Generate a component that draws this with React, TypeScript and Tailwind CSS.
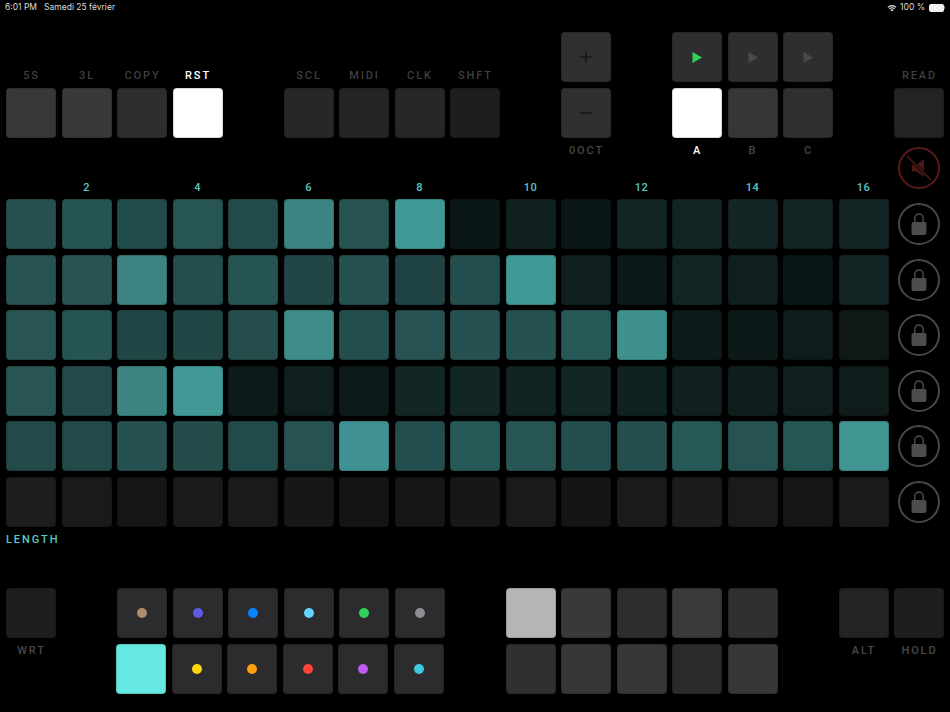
const Pad = ({ c, children }: { c: string; children?: React.ReactNode }) => (
  <div className={`h-[50px] w-[50px] rounded-[4px] border border-black/15 flex items-center justify-center ${c}`}>{children}</div>
);

const labelCore = "flex items-center justify-center h-[14px] pl-[1px] text-[11px] leading-[14px] font-medium tracking-[1.9px] whitespace-nowrap";
const labelBase = `${labelCore} pt-[2px]`;

const Dot = ({ c }: { c: string }) => <span className={`block h-[10px] w-[10px] rounded-full ${c}`} />;

const Play = ({ c }: { c: string }) => (
  <svg width="10" height="11" viewBox="0 0 10 11" className={c}>
    <path d="M0.5 0 L10 5.5 L0.5 11 Z" fill="currentColor" />
  </svg>
);

const Lock = () => (
  <div className="h-[42px] w-[42px] rounded-full border-[2.5px] border-[#484848] flex items-center justify-center">
    <svg width="16" height="24" viewBox="0 0 16 24">
      <path d="M3.8 12 V6.2 a4.2 4.2 0 0 1 8.4 0 V12" fill="none" stroke="#4d4d4d" strokeWidth="1.4" />
      <rect x="0.5" y="10" width="15" height="13" rx="2" fill="#4d4d4d" />
    </svg>
  </div>
);

const matrix: string[][] = [
  ["bg-[#265150]", "bg-[#255452]", "bg-[#224b4b]", "bg-[#265553]", "bg-[#224c4c]", "bg-[#3b8482]", "bg-[#265251]", "bg-[#409896]", "bg-[#0b1716]", "bg-[#11211f]", "bg-[#0b1716]", "bg-[#122524]", "bg-[#122423]", "bg-[#132625]", "bg-[#122423]", "bg-[#132625]"],
  ["bg-[#265251]", "bg-[#275352]", "bg-[#3b8481]", "bg-[#244e4d]", "bg-[#255452]", "bg-[#204645]", "bg-[#255150]", "bg-[#204443]", "bg-[#234e4d]", "bg-[#409896]", "bg-[#0f201f]", "bg-[#0b1918]", "bg-[#122524]", "bg-[#0f1f1e]", "bg-[#0b1716]", "bg-[#122423]"],
  ["bg-[#285453]", "bg-[#255452]", "bg-[#214646]", "bg-[#204645]", "bg-[#244d4c]", "bg-[#3e8c8a]", "bg-[#244e4d]", "bg-[#275251]", "bg-[#265150]", "bg-[#255150]", "bg-[#265855]", "bg-[#3f918e]", "bg-[#0c1a19]", "bg-[#0c1918]", "bg-[#0e1c1b]", "bg-[#0f1a18]"],
  ["bg-[#285453]", "bg-[#224b4a]", "bg-[#3c8581]", "bg-[#419896]", "bg-[#0c1a19]", "bg-[#0e1f1e]", "bg-[#0c1a19]", "bg-[#122624]", "bg-[#122624]", "bg-[#112423]", "bg-[#122625]", "bg-[#0f2120]", "bg-[#0f201f]", "bg-[#0e1e1d]", "bg-[#0f1f1e]", "bg-[#0f1c1b]"],
  ["bg-[#214a49]", "bg-[#214a49]", "bg-[#265150]", "bg-[#244c4b]", "bg-[#214b4b]", "bg-[#265251]", "bg-[#409193]", "bg-[#234e4d]", "bg-[#265a57]", "bg-[#285655]", "bg-[#244e4d]", "bg-[#244f4e]", "bg-[#265857]", "bg-[#265251]", "bg-[#255653]", "bg-[#409593]"],
  ["bg-[#1d1d1d]", "bg-[#1a1a1a]", "bg-[#161616]", "bg-[#1b1b1b]", "bg-[#1a1a1a]", "bg-[#171717]", "bg-[#141414]", "bg-[#161616]", "bg-[#171717]", "bg-[#1a1a1a]", "bg-[#151515]", "bg-[#1a1a1a]", "bg-[#1c1c1c]", "bg-[#1a1a1a]", "bg-[#161616]", "bg-[#1a1a1a]"],
];

const numbers = [
  { n: "2", c: "col-start-2" },
  { n: "4", c: "col-start-4" },
  { n: "6", c: "col-start-6" },
  { n: "8", c: "col-start-8" },
  { n: "10", c: "col-start-10" },
  { n: "12", c: "col-start-12" },
  { n: "14", c: "col-start-14" },
  { n: "16", c: "col-start-16" },
];

const topDots = [
  { d: "bg-[#ac8e68]", c: "col-start-3" },
  { d: "bg-[#5e5ce6]", c: "col-start-4" },
  { d: "bg-[#0a84ff]", c: "col-start-5" },
  { d: "bg-[#64d2ff]", c: "col-start-6" },
  { d: "bg-[#30d158]", c: "col-start-7" },
  { d: "bg-[#8e8e93]", c: "col-start-8" },
];
const lowDots = [
  { d: "bg-[#ffd60a]", c: "col-start-4" },
  { d: "bg-[#ff9f0a]", c: "col-start-5" },
  { d: "bg-[#ff453a]", c: "col-start-6" },
  { d: "bg-[#bf5af2]", c: "col-start-7" },
  { d: "bg-[#40c8e0]", c: "col-start-8" },
];

export default function App() {
  return (
    <div className="w-[950px] h-[712px] overflow-hidden bg-black font-['Roboto',sans-serif]">
      {/* status bar */}
      <div className="h-[14px] pt-[1px] flex items-center justify-between pl-[5px] pr-[5px] text-[8.5px] text-[#dcdcdc] font-['Inter',sans-serif]">
        <div className="flex gap-[7px]">
          <span>6:01 PM</span>
          <span>Samedi 25 février</span>
        </div>
        <div className="flex items-center gap-[3px]">
          <svg width="10" height="8" viewBox="0 0 10 8">
            <path d="M5 7.6 L3.4 5.9 A2.4 2.4 0 0 1 6.6 5.9 Z" fill="#e8e8e8" />
            <path d="M2.5 5 A3.6 3.6 0 0 1 7.5 5" fill="none" stroke="#e8e8e8" strokeWidth="1.1" />
            <path d="M0.9 3.3 A5.8 5.8 0 0 1 9.1 3.3" fill="none" stroke="#e8e8e8" strokeWidth="1.1" />
          </svg>
          <span>100 %</span>
          <span className="ml-[1px] flex items-center">
            <span className="block h-[8px] w-[15px] rounded-[2px] bg-[#f0f0f0]" />
            <span className="block h-[3px] w-[1px] bg-[#777777]" />
          </span>
        </div>
      </div>

      {/* top controls */}
      <div className="mt-[18px] ml-[6px] grid grid-cols-[repeat(17,50px)] grid-rows-[50px_50px_14px_31px] gap-x-[5.5px] gap-y-[5.5px]">
        <div className={`${labelBase} col-start-1 row-start-1 self-end text-[#3f3f3f]`}>5S</div>
        <div className={`${labelBase} col-start-2 row-start-1 self-end text-[#3f3f3f]`}>3L</div>
        <div className={`${labelBase} col-start-3 row-start-1 self-end text-[#3f3f3f]`}>COPY</div>
        <div className={`${labelBase} col-start-4 row-start-1 self-end text-white`}>RST</div>
        <div className={`${labelBase} col-start-6 row-start-1 self-end text-[#3f3f3f]`}>SCL</div>
        <div className={`${labelBase} col-start-7 row-start-1 self-end text-[#3f3f3f]`}>MIDI</div>
        <div className={`${labelBase} col-start-8 row-start-1 self-end text-[#3f3f3f]`}>CLK</div>
        <div className={`${labelBase} col-start-9 row-start-1 self-end text-[#3f3f3f]`}>SHFT</div>
        <div className={`${labelBase} col-start-17 row-start-1 self-end text-[#3f3f3f]`}>READ</div>

        <Pad c="col-start-1 row-start-2 bg-[#383838]" />
        <Pad c="col-start-2 row-start-2 bg-[#393939]" />
        <Pad c="col-start-3 row-start-2 bg-[#2e2e2e]" />
        <Pad c="col-start-4 row-start-2 bg-white" />
        <Pad c="col-start-6 row-start-2 bg-[#272727]" />
        <Pad c="col-start-7 row-start-2 bg-[#242424]" />
        <Pad c="col-start-8 row-start-2 bg-[#272727]" />
        <Pad c="col-start-9 row-start-2 bg-[#1e1e1e]" />
        <Pad c="col-start-17 row-start-2 bg-[#232323]" />

        <Pad c="col-start-11 row-start-1 bg-[#303030]">
          <svg width="14" height="14" viewBox="0 0 14 14">
            <path d="M1 7 H13 M7 1 V13" stroke="#0c0c0c" strokeWidth="1.1" />
          </svg>
        </Pad>
        <Pad c="col-start-11 row-start-2 bg-[#303030]">
          <svg width="14" height="14" viewBox="0 0 14 14">
            <path d="M1 7 H13" stroke="#0c0c0c" strokeWidth="1.1" />
          </svg>
        </Pad>
        <div className={`${labelBase} col-start-11 row-start-3 text-[#484848]`}>0OCT</div>

        <Pad c="col-start-13 row-start-1 bg-[#2e2e30]"><Play c="text-[#30d158]" /></Pad>
        <Pad c="col-start-14 row-start-1 bg-[#2e2e30]"><Play c="text-[#4a4a4a]" /></Pad>
        <Pad c="col-start-15 row-start-1 bg-[#2e2e30]"><Play c="text-[#4a4a4a]" /></Pad>
        <Pad c="col-start-13 row-start-2 bg-white" />
        <Pad c="col-start-14 row-start-2 bg-[#363636]" />
        <Pad c="col-start-15 row-start-2 bg-[#2f2f2f]" />
        <div className={`${labelBase} col-start-13 row-start-3 text-white`}>A</div>
        <div className={`${labelBase} col-start-14 row-start-3 text-[#484848]`}>B</div>
        <div className={`${labelBase} col-start-15 row-start-3 text-[#484848]`}>C</div>

        <div className="col-start-17 row-start-3 row-span-2 flex items-center justify-center">
          <div className="h-[42px] w-[42px] rounded-full border-[2.5px] border-[#5a1a18] flex items-center justify-center">
            <svg width="32" height="32" viewBox="0 0 32 32">
              <path d="M9 12.5 H13.5 L21 7 V25 L13.5 19.5 H9 Z" fill="#4a1715" />
              <path d="M4.5 4.5 L27.5 27.5" stroke="#000000" strokeWidth="3" />
              <path d="M4 4 L28 28" stroke="#5a1a18" strokeWidth="1.3" />
            </svg>
          </div>
        </div>

        {numbers.map(({ n, c }) => (
          <div
            key={n}
            className={`${c} row-start-4 self-end flex items-center justify-center h-[14px] pt-[3px] text-[11px] font-medium tracking-[0.4px] text-[#58c9c5]`}
          >
            {n}
          </div>
        ))}
      </div>

      {/* step matrix */}
      <div className="mt-[5.5px] ml-[6px] grid grid-cols-[repeat(17,50px)] gap-x-[5.5px] gap-y-[5.5px]">
        {matrix.map((row, r) => (
          <div key={r} className="contents">
            {row.map((c, i) => (
              <Pad key={i} c={c} />
            ))}
            <div className="h-[50px] flex items-center justify-center">
              <Lock />
            </div>
          </div>
        ))}
      </div>

      <div className="mt-[5.5px] ml-[6px] h-[14px] pt-[2px] flex items-center text-[11px] font-medium tracking-[1.9px] text-[#58c9c5]">
        LENGTH
      </div>

      {/* bottom controls */}
      <div className="mt-[42px] ml-[6px] grid grid-cols-[repeat(17,50px)] grid-rows-[50px_50px] gap-x-[5.5px] gap-y-[5.5px]">
        <Pad c="col-start-1 row-start-1 bg-[#1e1e1e]" />
        <div className={`${labelCore} col-start-1 row-start-2 text-[#484848]`}>WRT</div>

        {topDots.map(({ d, c }) => (
          <Pad key={d} c={`${c} row-start-1 bg-[#2c2c2e]`}>
            <Dot c={d} />
          </Pad>
        ))}
        <Pad c="col-start-3 row-start-2 ml-[-0.7px] bg-[#66e8e2]" />
        {lowDots.map(({ d, c }) => (
          <Pad key={d} c={`${c} row-start-2 ml-[-0.7px] bg-[#2c2c2e]`}>
            <Dot c={d} />
          </Pad>
        ))}

        <Pad c="col-start-10 row-start-1 bg-[#b5b5b5]" />
        <Pad c="col-start-11 row-start-1 bg-[#393939]" />
        <Pad c="col-start-12 row-start-1 bg-[#2d2d2d]" />
        <Pad c="col-start-13 row-start-1 bg-[#3a3a3a]" />
        <Pad c="col-start-14 row-start-1 bg-[#303030]" />
        <Pad c="col-start-10 row-start-2 bg-[#303030]" />
        <Pad c="col-start-11 row-start-2 bg-[#363636]" />
        <Pad c="col-start-12 row-start-2 bg-[#363636]" />
        <Pad c="col-start-13 row-start-2 bg-[#2a2a2a]" />
        <Pad c="col-start-14 row-start-2 bg-[#373737]" />

        <Pad c="col-start-16 row-start-1 bg-[#232323]" />
        <Pad c="col-start-17 row-start-1 bg-[#1e1e1e]" />
        <div className={`${labelCore} col-start-16 row-start-2 text-[#484848]`}>ALT</div>
        <div className={`${labelCore} col-start-17 row-start-2 text-[#484848]`}>HOLD</div>
      </div>
    </div>
  );
}
